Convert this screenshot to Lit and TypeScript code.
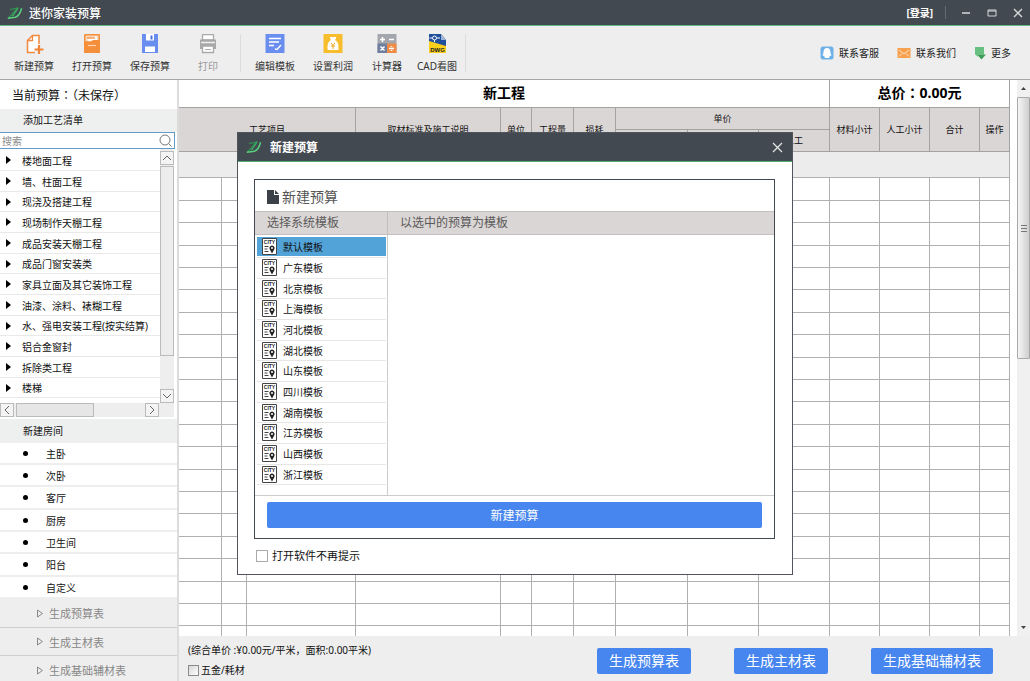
import { LitElement, html, css, svg } from "lit";
import { customElement, state } from "lit/decorators.js";
import { classMap } from "lit/directives/class-map.js";

const logo = html`<svg class="logo" viewBox="0 0 16 12" width="16" height="12" aria-hidden="true">
  <path d="M3 2.600L10.500 1 1.500 11" fill="none" stroke="#2f8f50" stroke-width="1.200"/>
  <path d="M5.500 9.200L11 1.200" fill="none" stroke="#3fae62" stroke-width="1.300"/>
  <path d="M.8 11.300L8.500 10.200Q12.800 8.500 14.600 1.200" fill="none" stroke="#57d080" stroke-width="1.500"/>
</svg>`;

const icons: Record<string, unknown> = {
  create: svg`<path d="M15 10V1.500H8.500L3.500 6.500V18.500H11" fill="#fff" stroke="#f08a3e" stroke-width="1.500"/><path d="M8.500 1.500V6.500H3.500" fill="none" stroke="#f08a3e" stroke-width="1.300"/><path d="M15 11v9M10.500 15.500h9" stroke="#f08437" stroke-width="2.200"/>`,
  open: svg`<path d="M2 1q0-1 1-1h14q1 0 1 1v18H2z" fill="#f58f3c"/><path d="M3.500 1.500h13v6h-13z" fill="#fbd9bb"/><path d="M5 5l8-2.500h2V6L7 7.500z" fill="#fff"/><path d="M5 4h8" stroke="#f08437" stroke-width="1.200"/><path d="M2 7.500h7L11 6h7v13H2z" fill="#f58f3c"/><path d="M6 11.500h8" stroke="#fbd3ae" stroke-width="1.200"/>`,
  save: svg`<path d="M2 0h16v19H2z" fill="#6a8df0"/><path d="M6 0h8v6.500H6z" fill="#fff"/><path d="M10.500 1.500h2v4h-2z" fill="#4b6fdc"/><path d="M5 12.500h10V18H5z" fill="#fff"/>`,
  print: svg`<path d="M4.500 .7h11V6h-11z" fill="#fff" stroke="#aaa" stroke-width="1.300"/><path d="M2 5.500h16v9.500H2z" fill="#a9a9a9"/><path d="M3 8.500h14" stroke="#f2f2f2" stroke-width="1.400"/><path d="M4.500 12h11v6.500h-11z" fill="#fff" stroke="#a9a9a9" stroke-width="1.300"/><path d="M7 15.500h6" stroke="#a9a9a9"/>`,
  edit: svg`<path d="M.5 0h19v19H.5z" fill="#6a8df0"/><path d="M4 4.500h12M4 8h10M4 11.500h5" stroke="#fff" stroke-width="1.300"/><path d="M10 15l2 .5 4-4.500" fill="none" stroke="#fff" stroke-width="1.400"/>`,
  profit: svg`<path d="M.5 0h19v19H.5z" fill="#f8bd2d"/><path d="M7 3h6v1.500l-1 1.500c2 1 3.500 3.500 3.500 6.500V15q0 1-1 1h-9q-1 0-1-1v-2.500C4.500 9.500 6 7 8 6L7 4.500z" fill="#fff"/><path d="M8 9l2 2.500L12 9M10 11.500V15M8 12h4" stroke="#f2a81c" fill="none"/>`,
  calc: svg`<path d="M.5 0h19v19H.5z" fill="#a3a7ad"/><path d="M.5 9.500H10V19H.5z" fill="#6e7f9f"/><path d="M10 9.500h9.500V19H10z" fill="#f08b45"/><path d="M5.500 3v5M3 5.500h5M12 5.500h5M3.500 12.500l4 4M7.500 12.500l-4 4M12 14.500h5M14.500 12v1M14.500 16v1" stroke="#fff" stroke-width="1.500"/>`,
  cad: svg`<path d="M2 0h12l5 6v13H2z" fill="#f9cf1c"/><path d="M2 0h12l5 6v6L2 7z" fill="#1f4f9c"/><path d="M14 0l5 6h-5z" fill="#9fb6dd"/><circle cx="7.500" cy="4" r="2" fill="none" stroke="#fff"/><path d="M2.500 4H5M10 4h3M7.500 6v2" stroke="#fff"/><text x="10.500" y="17.500" text-anchor="middle" font-size="6" font-weight="700" font-family="Liberation Sans" fill="#222">DWG</text>`,
};

const tools = [
  { id: "create", label: "新建预算" },
  { id: "open", label: "打开预算" },
  { id: "save", label: "保存预算" },
  { id: "print", label: "打印", off: true },
];
const extras = [
  { id: "edit", label: "编辑模板" },
  { id: "profit", label: "设置利润" },
  { id: "calc", label: "计算器", narrow: true },
  { id: "cad", label: "CAD看图", narrow: true },
];
const crafts = ["楼地面工程", "墙、柱面工程", "现浇及搭建工程", "现场制作天棚工程", "成品安装天棚工程", "成品门窗安装类", "家具立面及其它装饰工程", "油漆、涂料、裱糊工程", "水、强电安装工程(按实结算)", "铝合金窗封", "拆除类工程", "楼梯"];
const rooms = ["主卧", "次卧", "客厅", "厨房", "卫生间", "阳台", "自定义"];
const reports = ["生成预算表", "生成主材表", "生成基础辅材表"];
const cities = ["默认", "广东", "北京", "上海", "河北", "湖北", "山东", "四川", "湖南", "江苏", "山西", "浙江"];
const columns = ["c43", "c25", "c109", "auto", "c31", "c42", "c42", "c72", "c71", "c71", "c50", "c50", "c50", "c30"];

const base = css`
  * { box-sizing: border-box; }
  button { font: inherit; color: inherit; background: none; border: 0; padding: 0; margin: 0; text-align: left; }
  ul { list-style: none; margin: 0; padding: 0; }
  svg { display: block; flex: none; }
  .colon { font-family: "Noto Sans CJK TC", sans-serif; }
`;

@customElement("app-titlebar")
class AppTitlebar extends LitElement {
  static styles = [base, css`
    :host { display: block; flex: none; }
    .bar { display: flex; align-items: center; height: 26px; padding: 0 7px; background: #434950; border-bottom: 1px solid #62bd83; color: #fff; }
    .name { flex: 1; margin-left: 6px; font-size: 12px; font-weight: 500; }
    .login { font-size: 10px; font-weight: 700; }
    .sep { width: 1px; height: 13px; margin: 0 15px 0 12px; background: #656b72; }
    .win { display: flex; gap: 16px; }
  `];
  render() {
    return html`<header class="bar">
      ${logo}<span class="name">迷你家装预算</span>
      <button class="login">[登录]</button><span class="sep"></span>
      <div class="win">
        <button aria-label="最小化"><svg width="10" height="10"><path d="M1 5h8" stroke="#d5d7d9" stroke-width="1.500"/></svg></button>
        <button aria-label="最大化"><svg width="10" height="10"><path d="M1 2h8v6H1zM1 3h8" fill="none" stroke="#d5d7d9"/></svg></button>
        <button aria-label="关闭"><svg width="10" height="10"><path d="M1 1l8 8M9 1l-8 8" stroke="#d5d7d9" stroke-width="1.400"/></svg></button>
      </div>
    </header>`;
  }
}

@customElement("app-toolbar")
class AppToolbar extends LitElement {
  static styles = [base, css`
    :host { display: block; flex: none; }
    .bar { display: flex; align-items: center; height: 54px; padding: 0 19px 0 5px; background: #eee; border-bottom: 1px solid #a6a6a6; font-size: 10px; color: #333; }
    .tool { display: flex; flex-direction: column; align-items: center; gap: 4px; width: 58px; padding-top: 2px; line-height: 16px; white-space: nowrap; }
    .narrow { width: 50px; }
    .off { color: #999; }
    .sep { width: 1px; height: 38px; margin: 0 5px 0 3px; background: #ddd; }
    .links { display: flex; gap: 18px; margin-left: auto; }
    .link { display: flex; align-items: center; gap: 5px; color: #222; text-decoration: none; }
  `];
  tool(t: any) {
    return html`<button class=${classMap({ tool: true, narrow: !!t.narrow, off: !!t.off })}>
      <svg viewBox="0 0 20 20" width="20" height="20">${icons[t.id]}</svg>${t.label}</button>`;
  }
  render() {
    return html`<nav class="bar">
      ${tools.map((t) => this.tool(t))}<span class="sep"></span>
      ${extras.map((t) => this.tool(t))}<span class="sep"></span>
      <div class="links">
        <a class="link" href="#"><svg width="14" height="14"><rect x=".5" y=".5" width="13" height="13" rx="2.500" fill="#6db1e8"/><path d="M7 2c-2.500 0-3.500 2-3.500 4.500L2.500 10l1.500-.5L5 12h4l1-2.500 1.500.5-1-3.500C10.500 4 9.500 2 7 2z" fill="#fff"/></svg>联系客服</a>
        <a class="link" href="#"><svg width="14" height="14"><path d="M.5 2h13v10H.5z" fill="#f7a14f"/><path d="M2 4l5 4 5-4M2 10.500l3-3M12 10.500l-3-3" fill="none" stroke="#fde0c2"/></svg>联系我们</a>
        <a class="link" href="#"><svg width="12" height="14"><path d="M1 1h9v7.500H1z" fill="#67c07f"/><path d="M3 8.500h9L7.500 13.500z" fill="#3d9d58"/><path d="M1 8l3 3V8z" fill="#67c07f"/></svg>更多</a>
      </div>
    </nav>`;
  }
}

@customElement("app-sidebar")
class AppSidebar extends LitElement {
  static styles = [base, css`
    :host { display: block; flex: none; width: 179px; overflow: hidden; border-right: 2px solid #dcdcdc; background: #fff; font-size: 10px; color: #111; }
    .side { display: flex; flex-direction: column; height: 100%; }
    .current { height: 29px; line-height: 30px; padding-left: 12px; font-size: 12px; flex: none; }
    .title { height: 23px; line-height: 23px; margin: 0; padding-left: 23px; font-size: 10px; font-weight: 400; background: #eeefef; flex: none; }
    .search { display: flex; align-items: center; height: 17px; margin-right: 2px; padding: 0 2px; border: 1px solid #5f9dc8; border-left: 0; flex: none; }
    .search input { flex: 1; min-width: 0; border: 0; padding: 0; outline: 0; font: inherit; background: none; }
    .search input::placeholder { color: #888; }
    .tree { display: flex; height: 254px; padding-right: 3px; flex: none; }
    .crafts { flex: 1; min-width: 0; padding-top: 1px; }
    .craft { height: 21px; border-bottom: 1px solid #e9e9e9; white-space: nowrap; }
    .craft:nth-child(3n) { height: 20px; }
    .craft button { display: flex; align-items: center; gap: 11px; width: 100%; height: 100%; padding-left: 6px; }
    .vbar { display: flex; flex-direction: column; width: 14px; padding-top: 2px; background: #eee; }
    .hbar { display: flex; height: 14px; margin-right: 3px; padding-right: 15px; background: #eee; flex: none; }
    .arrow { display: grid; place-items: center; width: 14px; height: 14px; border: 1px solid #bbb; background: #f4f4f4; flex: none; }
    .vthumb { height: 190px; margin-top: 1px; border: 1px solid #bbb; background: #ededed; }
    .vbar .last { margin-top: auto; }
    .hthumb { width: 78px; margin-left: 2px; border: 1px solid #bbb; background: #e6e6e6; }
    .hbar .last { margin-left: auto; }
    .newroom { margin-top: 2px; height: 24px; line-height: 25px; }
    .room { height: 22px; border-bottom: 2px solid #eee; }
    .room:nth-child(3n) { height: 23px; }
    .room button { display: flex; align-items: center; gap: 18px; width: 100%; height: 100%; padding-left: 23px; }
    .dot { width: 5px; height: 5px; border-radius: 50%; background: #000; }
    .reports { flex: 1; background: #eee; }
    .report { display: flex; align-items: center; gap: 6px; width: 100%; height: 29px; padding-left: 37px; border-bottom: 1px solid #cfcfcf; font-size: 11px; color: #888; }
    li:nth-child(2) .report { height: 28px; }
  `];
  render() {
    return html`<aside class="side">
      <div class="current">当前预算<span class="colon">：</span>（未保存）</div>
      <h2 class="title">添加工艺清单</h2>
      <label class="search"><input type="text" placeholder="搜索" aria-label="搜索" />
        <svg width="13" height="13"><circle cx="6" cy="6" r="5" fill="none" stroke="#777"/><path d="M9.500 9.500l3 3" stroke="#777"/></svg></label>
      <div class="tree">
        <ul class="crafts">${crafts.map((c) => html`<li class="craft"><button><svg width="5" height="8"><path d="M0 0l5 4-5 4z"/></svg>${c}</button></li>`)}</ul>
        <div class="vbar">
          <button class="arrow" aria-label="向上"><svg width="8" height="6"><path d="M0 5l4-4 4 4" fill="none" stroke="#666"/></svg></button>
          <div class="vthumb"></div>
          <button class="arrow last" aria-label="向下"><svg width="8" height="6"><path d="M0 1l4 4 4-4" fill="none" stroke="#666"/></svg></button>
        </div>
      </div>
      <div class="hbar">
        <button class="arrow" aria-label="向左"><svg width="6" height="8"><path d="M5 0L1 4l4 4" fill="none" stroke="#666"/></svg></button>
        <div class="hthumb"></div>
        <button class="arrow last" aria-label="向右"><svg width="6" height="8"><path d="M1 0l4 4-4 4" fill="none" stroke="#666"/></svg></button>
      </div>
      <h2 class="title newroom">新建房间</h2>
      <ul>${rooms.map((r) => html`<li class="room"><button><span class="dot"></span>${r}</button></li>`)}</ul>
      <ul class="reports">${reports.map((r) => html`<li><button class="report"><svg width="6" height="9"><path d="M.5 1l5 3.500-5 3.500z" fill="none" stroke="#888"/></svg>${r}</button></li>`)}</ul>
    </aside>`;
  }
}

@customElement("app-sheet")
class AppSheet extends LitElement {
  static styles = [base, css`
    :host { display: flex; flex-direction: column; flex: 1; min-width: 0; background: #fff; }
    .area { display: flex; flex: 1; min-height: 0; }
    .sheet { flex: 1; min-width: 0; overflow: hidden; margin-right: 7px; }
    table { width: 100%; table-layout: fixed; border-collapse: separate; border-spacing: 0; font-size: 9px; color: #111; }
    th, td { padding: 0; border: 0 solid #b0b0b0; border-width: 0 1px 1px 0; font-weight: 400; overflow: hidden; white-space: nowrap; }
    th { background: #dad6d5; border-color: #a3a3a3; height: 22px; }
    .big { height: 28px; padding-bottom: 2px; background: #fff; font-size: 14px; line-height: 20px; font-weight: 700; color: #000; }
    .section { height: 26px; background: #ececec; }
    .row td { height: 22px; }
    .row:nth-child(5n + 2) td, .row:nth-child(5n + 4) td { height: 23px; }
    .c43 { width: 43px; } .c25 { width: 25px; } .c109 { width: 109px; } .c31 { width: 31px; } .c42 { width: 42px; }
    .c72 { width: 72px; } .c71 { width: 71px; } .c50 { width: 50px; } .c30 { width: 30px; }
    .bar { display: flex; flex-direction: column; align-items: center; width: 13px; padding: 6px 0; background: #f0f0f0; }
    .thumb { display: grid; place-items: center; width: 13px; height: 262px; margin-top: 6px; border: 1px solid #a9a9a9; border-radius: 1px; background: linear-gradient(90deg, #f6f6f6, #cfcfcf); }
    .bar .down { margin-top: auto; }
    .foot { display: flex; justify-content: space-between; height: 45px; padding: 4px 37px 0 9px; background: #eee; font-size: 10px; color: #111; flex: none; }
    .info { line-height: 20px; white-space: nowrap; }
    .check { display: flex; align-items: center; gap: 2px; }
    .check input { appearance: none; width: 11px; height: 11px; margin: 0; border: 1px solid #8b8b8b; background: linear-gradient(135deg, #d8d8d8, #fff); }
    .actions { display: flex; gap: 43px; padding-top: 8px; }
    .action { height: 26px; padding: 0 12px; border-radius: 2px; background: #4786ef; color: #fff; font-size: 14px; line-height: 26px; white-space: nowrap; }
  `];
  render() {
    return html`
      <div class="area">
        <div class="sheet"><table>
          <colgroup>${columns.map((c) => html`<col class=${c} />`)}</colgroup>
          <thead>
            <tr><th class="big" colspan="10">新工程</th><th class="big" colspan="4">总价<span class="colon">：</span>0.00元</th></tr>
            <tr>
              <th colspan="3" rowspan="2">工艺项目</th><th rowspan="2">取材标准及施工说明</th><th rowspan="2">单位</th>
              <th rowspan="2">工程量</th><th rowspan="2">损耗</th><th colspan="3">单价</th>
              <th rowspan="2">材料小计</th><th rowspan="2">人工小计</th><th rowspan="2">合计</th><th rowspan="2">操作</th>
            </tr>
            <tr><th></th><th></th><th>人工</th></tr>
          </thead>
          <tbody>
            <tr><td class="section" colspan="14"></td></tr>
            ${Array.from({ length: 24 }, () => html`<tr class="row">${columns.map(() => html`<td></td>`)}</tr>`)}
          </tbody>
        </table></div>
        <div class="bar">
          <svg width="5" height="5"><path d="M0 4l2.500-3L5 4z" fill="#444"/></svg>
          <div class="thumb"><svg width="6" height="7"><path d="M0 .5h6M0 3.500h6M0 6.500h6" stroke="#777"/></svg></div>
          <svg class="down" width="5" height="5"><path d="M0 1l2.500 3L5 1z" fill="#444"/></svg>
        </div>
      </div>
      <footer class="foot">
        <div class="info"><div>(综合单价 :¥0.00元/平米，面积:0.00平米)</div>
          <label class="check"><input type="checkbox" />五金/耗材</label></div>
        <div class="actions">${reports.map((r) => html`<button class="action">${r}</button>`)}</div>
      </footer>`;
  }
}

@customElement("app-dialog")
class AppDialog extends LitElement {
  @state() private selected = 0;
  static styles = [base, css`
    :host { display: block; width: 556px; border: 1px solid #50555b; background: #fff; font-size: 10px; color: #111; }
    .head { display: flex; align-items: center; height: 29px; padding: 0 9px 0 8px; background: #434950; border-bottom: 1px solid #4fae72; color: #fff; font-size: 12px; font-weight: 700; }
    .head span { flex: 1; margin-left: 8px; }
    .body { padding: 17px 17px 10px 16px; }
    .panel { border: 1px solid #434950; }
    .name { display: flex; align-items: center; gap: 3px; height: 31px; margin: 0; padding: 3px 12px 0; font-size: 14px; line-height: 20px; font-weight: 400; color: #555; }
    .cols { display: grid; grid-template-columns: 133px 1fr; border-bottom: 1px solid #ccc; }
    .col { height: 24px; padding-left: 12px; line-height: 22px; font-size: 12px; color: #5a5a5a; background: #dad6d5; border: 0 solid #c2bfbe; border-width: 1px 0; }
    .first { border-right-width: 1px; }
    .list { height: 260px; padding: 2px 1px 0 2px; border-right: 1px solid #ccc; }
    .city { height: 21px; padding-bottom: 1px; border-bottom: 1px solid #e6e6e6; }
    .city:nth-child(3n) { height: 20px; }
    .city button { display: flex; align-items: center; gap: 6px; width: 100%; height: 100%; padding-left: 5px; }
    .on { background: #52a3d8; }
    .icon text { font: 700 5px "Liberation Sans", sans-serif; }
    .submit { padding: 6px 12px 10px; }
    .submit button { width: 100%; height: 26px; border-radius: 2px; background: #4786ef; color: #fff; font-size: 12px; text-align: center; }
    .check { display: flex; align-items: center; gap: 4px; margin: 9px 0 0 2px; font-size: 11px; line-height: 16px; }
    .check input { appearance: none; width: 12px; height: 12px; margin: 0; border: 1px solid #aaa; background: #fff; }
  `];
  render() {
    return html`
      <div class="head">${logo}<span>新建预算</span>
        <button aria-label="关闭"><svg width="11" height="11"><path d="M1 1l9 9M10 1l-9 9" stroke="#e3e4e5" stroke-width="1.300"/></svg></button></div>
      <div class="body">
        <section class="panel">
          <h1 class="name"><svg width="12" height="14"><path d="M0 0h7v5h5v9H0z" fill="#3c4148"/><path d="M8 0l4 4H8z" fill="#3c4148"/></svg>新建预算</h1>
          <div class="cols">
            <div class="col first">选择系统模板</div><div class="col">以选中的预算为模板</div>
            <ul class="list">${cities.map((c, i) => html`<li class="city">
              <button class=${classMap({ on: i === this.selected })} @click=${() => (this.selected = i)}>
                <svg class="icon" width="15" height="17" viewBox="0 0 15 17"><path d="M.5.5h14v16H.5z" fill="#fff" stroke="#444"/><text x="7.500" y="5.500" text-anchor="middle" fill="#222">CITY</text><path d="M2.500 8.500h4M2.500 11h3M2.500 13.500h4" stroke="#444"/><path d="M10 15.500L7.800 11.500a2.600 2.600 0 1 1 4.400 0z" fill="#222"/><circle cx="10" cy="10" r="1" fill="#fff"/></svg>${c}模板</button></li>`)}</ul>
            <div></div>
          </div>
          <div class="submit"><button>新建预算</button></div>
        </section>
        <label class="check"><input type="checkbox" />打开软件不再提示</label>
      </div>`;
  }
}

@customElement("app-root")
class AppRoot extends LitElement {
  static styles = [base, css`
    :host { display: block; height: 100vh; overflow: hidden; font-family: "Noto Sans", "Noto Sans CJK SC", sans-serif; }
    .app { display: flex; flex-direction: column; height: 100%; }
    .main { display: flex; flex: 1; min-height: 0; }
    .overlay { position: absolute; inset: 26px 0 0; display: flex; align-items: center; justify-content: center; }
  `];
  render() {
    return html`<div class="app">
      <app-titlebar></app-titlebar>
      <app-toolbar></app-toolbar>
      <main class="main"><app-sidebar></app-sidebar><app-sheet></app-sheet></main>
      <div class="overlay"><app-dialog role="dialog" aria-label="新建预算"></app-dialog></div>
    </div>`;
  }
}
